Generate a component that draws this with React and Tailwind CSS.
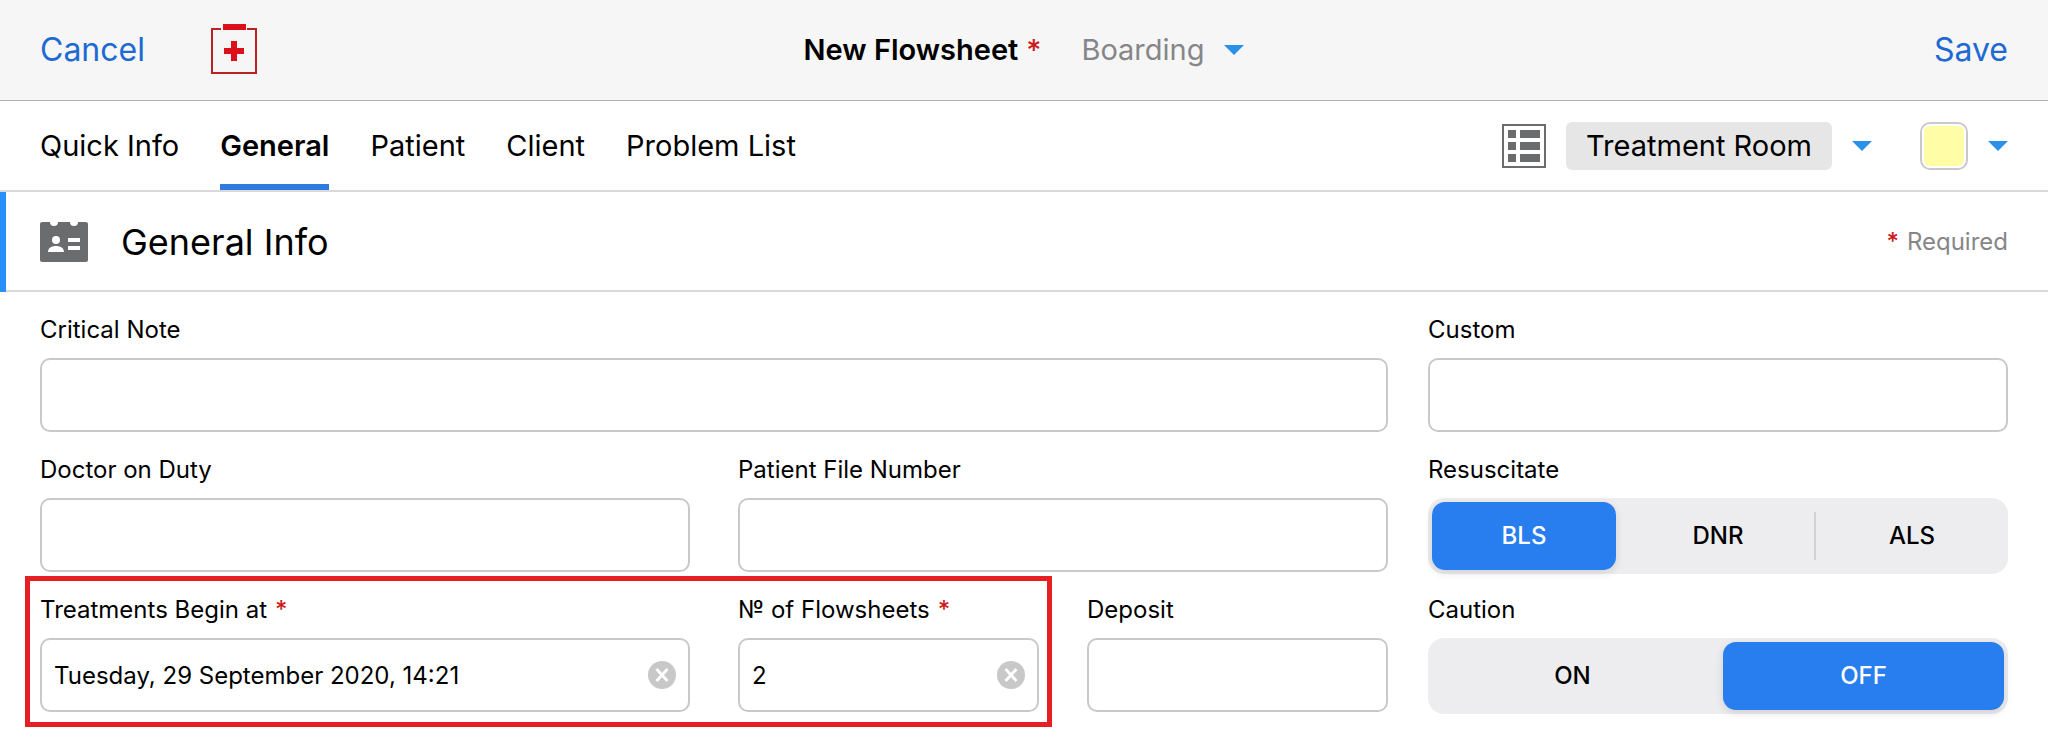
import { useState } from "react";

const TABS = ["Quick Info", "General", "Patient", "Client", "Problem List"];

function Caret() {
  return (
    <svg className="pointer-events-none h-[10px] w-5 shrink-0" viewBox="0 0 20 10" aria-hidden="true">
      <path d="M0 0H20L10 10Z" fill="#2b90ea" />
    </svg>
  );
}

function Star() {
  return <span className="font-medium text-[#cc1c1c]">*</span>;
}

function Field({ id, label, required, value = "", clearable, className = "" }) {
  const [text, setText] = useState(value);
  return (
    <div className={`flex min-w-0 flex-col gap-[10px] ${className}`}>
      <label htmlFor={id} className="flex gap-2 text-2xl leading-9">
        {label}
        {required && <Star />}
      </label>
      <div className="flex h-[74px] items-center rounded-[10px] border-2 border-[#c9c9cb] bg-white px-3">
        <input
          id={id}
          type="text"
          value={text}
          onChange={(e) => setText(e.target.value)}
          className="h-full min-w-0 flex-1 bg-transparent text-2xl outline-none"
        />
        {clearable && (
          <button type="button" aria-label={`Clear ${label}`} onClick={() => setText("")} className="shrink-0">
            <svg className="size-7" viewBox="0 0 28 28" aria-hidden="true">
              <circle cx="14" cy="14" r="14" fill="#c8c8c8" />
              <path d="M8.500 8L19.500 20M19.500 8L8.500 20" stroke="#fff" strokeWidth="2.8" />
            </svg>
          </button>
        )}
      </div>
    </div>
  );
}

function Segmented({ name, label, options, initial, columns }) {
  const [selected, setSelected] = useState(initial);
  const current = options.indexOf(selected);
  return (
    <div className="flex flex-col gap-[10px]" role="radiogroup" aria-labelledby={`${name}-label`}>
      <span id={`${name}-label`} className="text-2xl leading-9">
        {label}
      </span>
      <div className={`-mb-[2px] grid h-[76px] gap-[10px] rounded-2xl bg-[#ededef] p-1 ${columns}`}>
        {options.map((option, i) => (
          <label
            key={option}
            className={`relative flex cursor-pointer items-center justify-center rounded-[13px] text-2xl font-medium ${
              i === current ? "bg-[#287eee] text-white shadow-[0_3px_8px_rgba(0,0,0,0.12)]" : ""
            }`}
          >
            <input
              type="radio"
              name={name}
              checked={i === current}
              onChange={() => setSelected(option)}
              className="sr-only"
            />
            {option}
            {i > 0 && i !== current && i - 1 !== current && (
              <span className="absolute top-[10px] bottom-[10px] -left-[6px] w-[2px] bg-[#d2d2d5]" />
            )}
          </label>
        ))}
      </div>
    </div>
  );
}

export default function App() {
  const [tab, setTab] = useState("General");
  return (
    <div className="min-h-screen bg-white font-['Inter','Liberation_Sans',sans-serif] text-black">
      <header className="grid h-[101px] grid-cols-[1fr_auto_1fr] items-center border-b border-[#b0b0b2] bg-[#f6f6f6] px-10">
        <div className="flex items-center gap-[65px]">
          <button type="button" className="text-[32px] leading-10 text-[#2069d2]">
            Cancel
          </button>
          <svg className="h-[52px] w-[48px]" viewBox="-1 -1 48 52" aria-hidden="true">
            <path d="M10 4H1V48H45V4H36" fill="none" stroke="#b82424" strokeWidth="2" />
            <path d="M12 -1H35V5H12Z" fill="#dc1018" />
            <path d="M20 16H26V23H33V29H26V36H20V29H13V23H20Z" fill="#dc1018" />
          </svg>
        </div>
        <div className="flex items-center gap-10 text-[29px] leading-9">
          <h1 className="flex gap-2 font-semibold">
            New Flowsheet
            <Star />
          </h1>
          <div className="flex items-center gap-5">
            <select aria-label="Flowsheet type" className="field-sizing-content appearance-none bg-transparent text-[#868688] outline-none">
              <option>Boarding</option>
            </select>
            <Caret />
          </div>
        </div>
        <button type="button" className="justify-self-end text-[32px] leading-10 text-[#2069d2]">
          Save
        </button>
      </header>

      <div className="flex h-[91px] items-stretch justify-between border-b-2 border-[#d9d9db] px-10">
        <nav className="flex gap-[41px] text-[29px] leading-9">
          {TABS.map((name) => (
            <button
              key={name}
              type="button"
              onClick={() => setTab(name)}
              className={`border-y-6 border-t-transparent ${
                name === tab ? "border-b-[#3079de] font-semibold" : "border-b-transparent"
              }`}
            >
              {name}
            </button>
          ))}
        </nav>
        <div className="flex items-center">
          <svg className="mr-5 size-11" viewBox="0 0 44 44" aria-hidden="true">
            <rect x="1" y="1" width="42" height="42" fill="none" stroke="#6a6c6e" strokeWidth="2" />
            <path
              d="M6 6H14V14H6ZM18 6H38V14H18ZM6 18H14V26H6ZM18 18H38V26H18ZM6 30H14V38H6ZM18 30H38V38H18Z"
              fill="#6a6c6e"
            />
          </svg>
          <select
            aria-label="Room"
            className="field-sizing-content mr-5 h-12 appearance-none rounded-md bg-[#e6e6e6] px-5 text-[29px] outline-none"
          >
            <option>Treatment Room</option>
          </select>
          <Caret />
          <button type="button" aria-label="Flowsheet color" className="ml-12 flex items-center gap-5">
            <span className="size-12 rounded-[10px] border-2 border-[#c9c9cb] p-[2px]">
              <span className="block size-full rounded-md bg-[#fffea6]" />
            </span>
            <Caret />
          </button>
        </div>
      </div>

      <div className="border-l-6 border-[#2a8ff7]">
        <div className="flex h-[100px] items-center border-b-2 border-[#d9d9db] pt-[2px] pr-10 pl-[34px]">
          <svg className="h-10 w-12" viewBox="0 0 48 40" aria-hidden="true">
            <path
              d="M2 0H10A4 4 0 0 0 18 0H30A4 4 0 0 0 38 0H46Q48 0 48 2V38Q48 40 46 40H2Q0 40 0 38V2Q0 0 2 0Z"
              fill="#6a6c6e"
            />
            <circle cx="16" cy="18" r="4" fill="#fff" />
            <path d="M8 30C8 26 11.500 24 16 24S24 26 24 30ZM28 16H40V20H28ZM28 24H40V28H28Z" fill="#fff" />
          </svg>
          <h2 className="ml-[33px] text-4xl leading-12">General Info</h2>
          <p className="ml-auto flex gap-2 text-2xl leading-9 text-[#868688]">
            <Star />
            Required
          </p>
        </div>
      </div>

      <main className="grid grid-cols-[minmax(0,1348fr)_minmax(0,580fr)] gap-10 px-10 py-5">
        <div className="grid grid-cols-[minmax(0,650fr)_minmax(0,301fr)_minmax(0,301fr)] gap-x-12 gap-y-5">
          <Field id="critical-note" label="Critical Note" className="col-span-3" />
          <Field id="doctor" label="Doctor on Duty" />
          <Field id="file-number" label="Patient File Number" className="col-span-2" />
          <Field
            id="begin-at"
            label="Treatments Begin at"
            required
            clearable
            value="Tuesday, 29 September 2020, 14:21"
            className="col-start-1 row-start-3"
          />
          <Field
            id="flowsheet-count"
            label="№ of Flowsheets"
            required
            clearable
            value="2"
            className="col-start-2 row-start-3"
          />
          <Field id="deposit" label="Deposit" className="col-start-3 row-start-3" />
          <div className="pointer-events-none z-10 col-span-2 col-start-1 row-start-3 -mt-4 -mr-[13px] -mb-[15px] -ml-[15px] border-5 border-[#e81e25]" />
        </div>
        <div className="flex flex-col gap-5">
          <Field id="custom" label="Custom" />
          <Segmented
            name="resuscitate"
            label="Resuscitate"
            options={["BLS", "DNR", "ALS"]}
            initial="BLS"
            columns="grid-cols-3"
          />
          <Segmented name="caution" label="Caution" options={["ON", "OFF"]} initial="OFF" columns="grid-cols-2" />
        </div>
      </main>
    </div>
  );
}
